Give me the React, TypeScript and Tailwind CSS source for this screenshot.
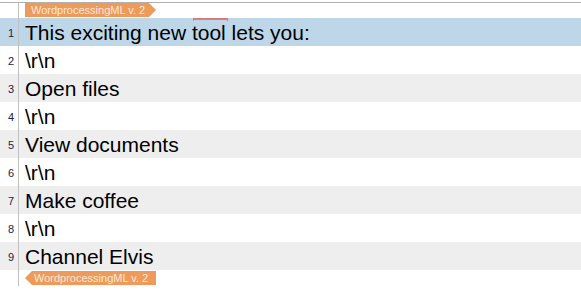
import React from "react";

const rows: { n: number; text: string; bg: string }[] = [
  { n: 1, text: "This exciting new tool lets you:", bg: "bg-[#bdd7e8]" },
  { n: 2, text: "\\r\\n", bg: "bg-white" },
  { n: 3, text: "Open files", bg: "bg-[#eeeeee]" },
  { n: 4, text: "\\r\\n", bg: "bg-white" },
  { n: 5, text: "View documents", bg: "bg-[#eeeeee]" },
  { n: 6, text: "\\r\\n", bg: "bg-white" },
  { n: 7, text: "Make coffee", bg: "bg-[#eeeeee]" },
  { n: 8, text: "\\r\\n", bg: "bg-white" },
  { n: 9, text: "Channel Elvis", bg: "bg-[#eeeeee]" },
];

export default function App() {
  return (
    <div
      className="w-[581px] h-[296px] bg-white overflow-hidden"
      style={{ fontFamily: '"Liberation Sans", Arial, sans-serif' }}
    >
      <div className="h-[2px]" />
      <div className="flex h-[16px] border-t border-[#b0b0b0]">
        <div className="w-[19px] shrink-0 border-r border-[#c0c0c0]" />
        <div className="pl-[6px]">
          <div className="h-[14px] w-[131px] whitespace-nowrap bg-[#ee9a5a] text-[#fde9dc] text-[11px] leading-[14px] pl-[6px] [clip-path:polygon(0_0,calc(100%-7px)_0,100%_50%,calc(100%-7px)_100%,0_100%)]">
            WordprocessingML v. 2
          </div>
        </div>
      </div>
      {rows.map((r) => (
        <div key={r.n} className={`flex h-[28px] ${r.bg}`}>
          <div className="w-[19px] shrink-0 border-r border-[#c0c0c0] flex items-center justify-end pr-[4px] pt-[2px] text-[11px] text-[#222244]">
            {r.n}
          </div>
          <div className="relative pl-[6px] flex items-center text-[21px] text-black leading-none whitespace-nowrap">
            {r.text}
            {r.n === 1 && (
              <div className="absolute left-[174px] top-0 w-[35px] h-[3px] border-t-2 border-l border-r border-[#e07a7a]" />
            )}
          </div>
        </div>
      ))}
      <div className="flex h-[16px]">
        <div className="w-[19px] shrink-0 border-r border-[#c0c0c0]" />
        <div className="pl-[6px] pt-[1px]">
          <div className="h-[14px] w-[131px] whitespace-nowrap bg-[#ee9a5a] text-[#fde9dc] text-[11px] leading-[14px] pl-[9px] [clip-path:polygon(7px_0,100%_0,100%_100%,7px_100%,0_50%)]">
            WordprocessingML v. 2
          </div>
        </div>
      </div>
    </div>
  );
}
